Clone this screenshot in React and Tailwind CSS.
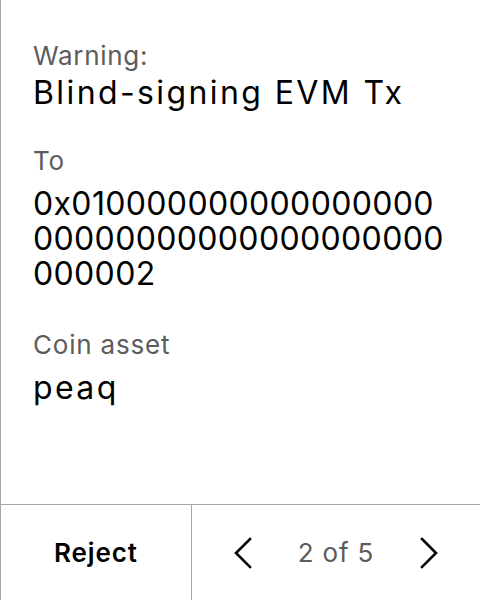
import React from "react";

const Chevron = ({ dir }) => (
  <svg width="20" height="34" viewBox="0 0 20 34" fill="none" stroke="#000" strokeWidth="2.6" strokeLinecap="square" strokeLinejoin="miter">
    {dir === "left" ? <path d="M17 3 L3 17 L17 31" /> : <path d="M3 3 L17 17 L3 31" />}
  </svg>
);

const App = () => {
  return (
    <div
      className="w-[480px] h-[600px] flex flex-col bg-white border-l border-[#a6a6a6] text-black"
      style={{ fontFamily: "Inter, 'Noto Sans', sans-serif" }}
    >
      {/* Review content */}
      <main className="h-[504px] px-8 pt-[40px]">
        <p className="text-[26px] leading-[32px] tracking-[0.7px] text-[#5c5c5c]">Warning:</p>
        <p className="mt-[1px] text-[32px] leading-[40px] tracking-[2.4px] whitespace-nowrap">Blind-signing EVM Tx</p>

        <p className="mt-[32px] text-[26px] leading-[32px] tracking-[0.7px] text-[#5c5c5c]">To</p>
        <p className="mt-[9px] text-[32px] leading-[35px] tracking-[0.35px] whitespace-nowrap">
          0x010000000000000000
          <br />
          00000000000000000000
          <br />
          000002
        </p>

        <p className="mt-[38px] text-[26px] leading-[32px] tracking-[0.8px] text-[#5c5c5c]">Coin asset</p>
        <p className="mt-[7px] text-[32px] leading-[40px] tracking-[2.4px]">peaq</p>
      </main>

      {/* Footer nav */}
      <footer className="flex flex-1 border-t border-[#a6a6a6]">
        <div className="w-[191px] flex items-center justify-center border-r border-[#a6a6a6]">
          <span className="text-[26px] leading-[32px] tracking-[0.9px] font-semibold">Reject</span>
        </div>
        <div className="flex-1 flex items-center justify-center gap-[45px]">
          <Chevron dir="left" />
          <span className="text-[26px] leading-[32px] tracking-[0.8px] text-[#5c5c5c]">2 of 5</span>
          <Chevron dir="right" />
        </div>
      </footer>
    </div>
  );
};

export default App;
